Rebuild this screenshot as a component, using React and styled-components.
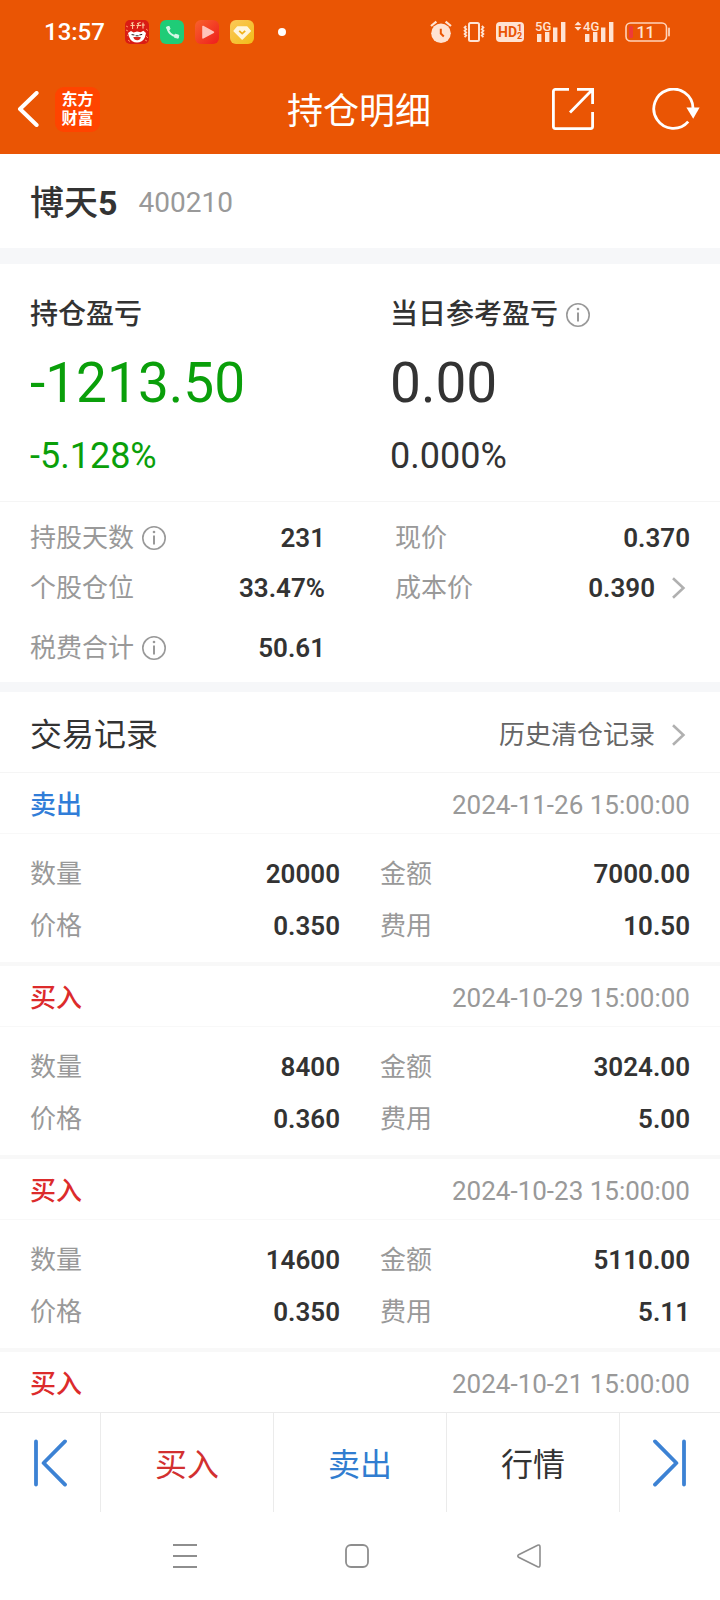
import React from 'react'
import styled, { createGlobalStyle } from 'styled-components'

const GlobalStyle = createGlobalStyle`
  * {
    box-sizing: border-box;
  }
  body {
    margin: 0;
    background: #fff;
    color: #333;
    font-family: Roboto, "Noto Sans CJK SC", sans-serif;
  }
  h1, h2, dl, dd, p {
    margin: 0;
    font-weight: 400;
  }
  button {
    padding: 0;
    border: 0;
    background: none;
    color: inherit;
    font: inherit;
    cursor: pointer;
  }
  svg {
    display: block;
    flex: none;
  }
`
const Page = styled.div`
  display: flex;
  flex-direction: column;
  min-height: 100vh;
`
const TopBar = styled.header`
  background: #ea5504;
  color: #fff;
`
const StatusBar = styled.div`
  display: flex;
  justify-content: space-between;
  align-items: center;
  height: 64px;
  padding: 0 49px 0 44px;
`
const StatusGroup = styled.div`
  display: flex;
  align-items: center;
  gap: 11px;
`
const Signals = styled.div`
  display: flex;
  gap: 8px;
`
const Clock = styled.time`
  margin-right: 9px;
  font-size: 24px;
  font-weight: 500;
  line-height: 24px;
`
const Dot = styled.span`
  width: 8px;
  height: 8px;
  margin-left: 13px;
  border-radius: 50%;
  background: #fff;
`
const TitleBar = styled.div`
  display: grid;
  grid-template-columns: 1fr auto 1fr;
  align-items: center;
  height: 90px;
  padding: 0 19px 0 17px;
`
const TitleSide = styled.div`
  display: flex;
  justify-content: ${props => props.end ? 'flex-end' : 'flex-start'};
  align-items: center;
  gap: ${props => props.end ? '58px' : '16px'};
`
const Title = styled.h1`
  padding-top: 6px;
  font-size: 36px;
  line-height: 44px;
`
const Logo = styled.div`
  display: flex;
  flex-direction: column;
  justify-content: center;
  align-items: center;
  width: 45px;
  height: 45px;
  border-radius: 9px;
  background: #ff4400;
  font-size: 16px;
  font-weight: 700;
  line-height: 19px;
`
const StockBar = styled.section`
  display: flex;
  align-items: center;
  gap: 21px;
  height: 94px;
  padding: 4px 30px 0;
`
const StockName = styled.h2`
  font-size: 34px;
  font-weight: 500;
  line-height: 44px;
`
const StockNumber = styled.span`
  font-weight: 700;
`
const StockCode = styled.span`
  color: #999;
  font-size: 28px;
  line-height: 32px;
`
const Band = styled.div`
  height: ${props => props.size}px;
  background: ${props => props.light ? '#f8f8f8' : '#f6f7f9'};
`
const Profit = styled.section`
  display: grid;
  grid-template-columns: 1fr 1fr;
  padding: 35px 0 23px;
  border-bottom: 1px solid #f5f5f5;
`
const ProfitItem = styled.div`
  padding-left: 30px;
  color: ${props => props.loss ? '#0a9f0a' : '#333'};
`
const ProfitLabel = styled.h2`
  display: flex;
  align-items: center;
  gap: 8px;
  height: 32px;
  color: #333;
  font-size: 28px;
  font-weight: 500;
  line-height: 32px;
`
const ProfitValue = styled.p`
  padding-top: 20px;
  font-size: 55px;
  line-height: 64px;
`
const ProfitRate = styled.p`
  padding-top: 19px;
  font-size: 36px;
  line-height: 44px;
`
const Pairs = styled.dl`
  display: grid;
  grid-template-columns: 1fr 1fr;
  column-gap: ${props => props.wide ? '70px' : '40px'};
  padding: ${props => props.wide ? '11px 30px 9px' : '14px 30px 10px'};
`
const Pair = styled.div`
  display: flex;
  justify-content: space-between;
  align-items: center;
  height: ${props => props.height}px;
  margin-top: ${props => props.spaced ? '10px' : '0'};
`
const Label = styled.dt`
  display: flex;
  align-items: center;
  gap: 8px;
  color: #999;
  font-size: 26px;
  line-height: 32px;
`
const Value = styled.dd`
  display: flex;
  align-items: center;
  gap: 16px;
  font-size: 26px;
  font-weight: 600;
  line-height: 32px;
`
const IconButton = styled.button`
  display: flex;
`
const RecordsHead = styled.div`
  display: flex;
  justify-content: space-between;
  align-items: center;
  height: 81px;
  padding: 5px 30px 0;
  border-bottom: 1px solid #f5f5f5;
`
const RecordsTitle = styled.h2`
  font-size: 32px;
  line-height: 40px;
`
const HistoryLink = styled.a`
  display: flex;
  align-items: center;
  gap: 16px;
  color: #666;
  font-size: 26px;
  line-height: 32px;
  text-decoration: none;
`
const Records = styled.section`
  flex: 1;
`
const RecordHead = styled.div`
  display: flex;
  justify-content: space-between;
  align-items: center;
  height: ${props => props.open ? '61px' : '60px'};
  padding: 3px 30px 0;
  border-bottom: ${props => props.open ? '1px solid #f8f8f8' : '0'};
  font-size: 26px;
  line-height: 32px;
`
const Side = styled.span`
  color: ${props => props.buy ? '#dc2b2b' : '#317dd8'};
  font-weight: 500;
`
const Stamp = styled.time`
  color: #999;
`
const ActionBar = styled.nav`
  display: flex;
  height: 100px;
  border-top: 1px solid #ebebeb;
`
const ActionButton = styled.button`
  display: flex;
  flex: ${props => props.edge ? '0 0 101px' : '1'};
  justify-content: center;
  align-items: center;
  padding-top: ${props => props.edge ? '0' : '4px'};
  border-right: 1px solid #ebebeb;
  color: ${props => props.tone || '#333'};
  font-size: 32px;
  line-height: 40px;
  &:last-child {
    flex-basis: 100px;
    border-right: 0;
  }
`
const SystemBar = styled.nav`
  display: flex;
  justify-content: center;
  align-items: center;
  gap: 148px;
  height: 88px;
  padding-right: 6px;
`

const InfoIcon = () => (
  <svg width="24" height="24" viewBox="0 0 24 24" fill="none" stroke="#999">
    <circle cx="12" cy="12" r="11.2" strokeWidth="1.6" />
    <path d="M12 9.4v9" strokeWidth="2" />
    <circle cx="12" cy="6" r="1.3" fill="#999" stroke="none" />
  </svg>
)
const Chevron = () => (
  <svg width="19" height="22" viewBox="0 0 19 22" fill="none" stroke="#b0b0b0" strokeWidth="2.6">
    <path d="M2 1.2l10.4 9.8L2 20.8" />
  </svg>
)
const BackIcon = () => (
  <svg width="22" height="36" viewBox="0 0 22 36" fill="none" stroke="#fff" strokeWidth="4">
    <path d="M19.6 2L3 18l16.6 16" strokeLinecap="round" strokeLinejoin="round" />
  </svg>
)
const ShareIcon = () => (
  <svg width="42" height="42" viewBox="0 0 42 42" fill="none" stroke="#fff" strokeWidth="2.8">
    <path d="M17 1.4H3.4a2 2 0 0 0-2 2v35.2a2 2 0 0 0 2 2h35.2a2 2 0 0 0 2-2V24" />
    <path d="M25 1.4h15.6V16M18 24.6L40 2" />
  </svg>
)
const RefreshIcon = () => (
  <svg width="49" height="42" viewBox="0 0 49 42" fill="none" stroke="#fff" strokeWidth="2.8">
    <path d="M36.2 33.6A19.6 19.6 0 1 1 41 20" />
    <path d="M34.4 19.4h13.2l-6.4 11.4z" fill="#fff" stroke="none" />
  </svg>
)

const FestiveIcon = () => (
  <svg width="24" height="24" viewBox="0 0 24 24">
    <rect width="24" height="24" rx="5" fill="#d91c14" />
    <path d="M6 3.4l2.6-1M5.4 5.4h4.4M7.6 3v6M12 3.6l3.6-1.2M11.4 5.4h4.8M13.6 3.4l-1.4 5.2M18 2.6v6M16.8 5h3" stroke="#ffd9a8" strokeWidth="1" />
    <path d="M1 10l2 1M21 9l2 1.6M2 15l1.6 1M21 16l2 2M3 20l2 1.6M1 6l2 1M20 20l2 1" stroke="#ff8a5c" strokeWidth="1" />
    <path d="M3 13l3-2 2.6 1.4 3.4-.8 3.6.6 2.800-1.400L21 13l-1.200 4.600C18.400 21 15.400 22.600 12 22.600S5.600 21 4.400 17.600z" fill="#fff" />
    <path d="M8.400 17h7.400c-.4 2.400-1.600 3.200-3.600 3.200S8.800 19.400 8.400 17z" fill="#d8261c" />
    <path d="M6.600 14.600l2.800.4M17.200 14.400l-2.800.6M10.600 15.800h3" stroke="#222" strokeWidth="1" />
  </svg>
)
const PhoneIcon = () => (
  <svg width="24" height="24" viewBox="0 0 24 24">
    <rect width="24" height="24" rx="6" fill="#1fcc77" />
    <path d="M7.8 8.4c.6 4 3.6 7.2 8.6 8" fill="none" stroke="#d5f7e6" strokeWidth="2" />
    <path d="M6.3 7.200l2.800-.9 1 2.800-2.400 1.200zM15 14.200l3.800 1-.6 3-3.600-.8z" fill="#d5f7e6" stroke="#d5f7e6" strokeLinejoin="round" />
  </svg>
)
const VideoIcon = () => (
  <svg width="24" height="24" viewBox="0 0 24 24">
    <defs>
      <linearGradient id="video" x1="0" y1="0" x2="1" y2="1">
        <stop offset="0" stopColor="#f8622c" />
        <stop offset="1" stopColor="#ee1d1d" />
      </linearGradient>
    </defs>
    <rect width="24" height="24" rx="6" fill="url(#video)" />
    <path d="M8 6.5v11.4l10.4-5.7z" fill="#ffc4bb" stroke="#ffc4bb" strokeWidth="1.6" strokeLinejoin="round" />
  </svg>
)
const GemIcon = () => (
  <svg width="24" height="24" viewBox="0 0 24 24">
    <defs>
      <linearGradient id="gem" x1="0" y1="0" x2="1" y2="1">
        <stop offset="0" stopColor="#fbc95a" />
        <stop offset="1" stopColor="#f2bc18" />
      </linearGradient>
    </defs>
    <rect width="24" height="24" rx="6" fill="url(#gem)" />
    <path d="M7.6 7h9.200l3.400 4-8 8-8-8z" fill="#fff6dc" stroke="#fff6dc" strokeWidth="1.6" strokeLinejoin="round" />
    <path d="M9.200 10.800l3 2.800 3-2.800" fill="none" stroke="#f0b21c" strokeWidth="1.8" />
  </svg>
)
const AlarmIcon = () => (
  <svg width="22" height="24" viewBox="0 0 22 24" fill="none">
    <circle cx="11" cy="13.2" r="9.8" fill="#ffe3d3" />
    <path d="M1 6l5.4-4.400M21 6l-5.400-4.400" stroke="#ffe3d3" strokeWidth="2.2" />
    <path d="M10.8 8.800v4.800l3 2.800" stroke="#ea5504" strokeWidth="2" />
  </svg>
)
const VibrateIcon = () => (
  <svg width="22" height="22" viewBox="0 0 22 22" fill="none" stroke="#ffe3d3">
    <rect x="6" y="2" width="10" height="18" rx="1.5" strokeWidth="2" />
    <path d="M3.200 5l-1.600 1.600 1.600 1.600-1.600 1.600 1.600 1.600-1.600 1.600 1.600 1.600-1.600 1.600M18.800 5l1.600 1.600-1.600 1.600 1.600 1.600-1.600 1.600 1.600 1.600-1.600 1.600 1.600 1.600" strokeWidth="1.8" />
  </svg>
)
const HdIcon = () => (
  <svg width="28" height="20" viewBox="0 0 28 20" fill="#ea5504" fontFamily="Roboto" fontWeight="700">
    <rect width="28" height="20" rx="4" fill="#ffe3d3" />
    <text x="2" y="15" fontSize="14">HD</text>
    <text x="21" y="9" fontSize="9">1</text>
    <text x="21" y="17" fontSize="9">2</text>
  </svg>
)
const SignalIcon = ({ label, arrows }) => (
  <svg width={arrows ? 40 : 31} height="24" viewBox={arrows ? '-9 0 40 24' : '0 0 31 24'} fill="#ffe3d3">
    {arrows && <path d="M-8.500 5.200l3.500-3.800 3.500 3.800zM-8.500 7h7L-5 10.800z" />}
    <text x="0" y="11" fontFamily="Roboto" fontWeight="500" fontSize="13">{label}</text>
    <path d="M2 14h4.400v8H2zM10 12h4.400v10H10zM18 7.500h4.400V22H18zM26 2h4.400v20H26z" />
  </svg>
)
const BatteryIcon = () => (
  <svg width="46" height="20" viewBox="0 0 46 20">
    <rect x="1" y="1" width="40.5" height="18" rx="4.5" fill="none" stroke="#ffd3bb" strokeWidth="1.6" />
    <path d="M44 6.500v7" stroke="#ffd3bb" strokeWidth="1.8" strokeLinecap="round" />
    <rect x="4" y="4" width="4" height="12" rx="1.5" fill="#ee3a3a" />
    <text x="20.5" y="15.5" textAnchor="middle" fontFamily="Roboto" fontWeight="500" fontSize="16" fill="#ffe3d3">11</text>
  </svg>
)

const FirstIcon = () => (
  <svg width="34" height="48" viewBox="0 0 34 48" fill="none" stroke="#3c82d4" strokeWidth="3.8" strokeLinecap="round" strokeLinejoin="round">
    <path d="M3 2.400v43.200M32 2.400L10.600 24 32 45.600" />
  </svg>
)
const LastIcon = () => (
  <svg width="34" height="48" viewBox="0 0 34 48" fill="none" stroke="#3c82d4" strokeWidth="3.8" strokeLinecap="round" strokeLinejoin="round">
    <path d="M31 2.400v43.200M2 2.400L23.400 24 2 45.600" />
  </svg>
)

const records = [
  { side: '卖出', time: '2024-11-26 15:00:00', count: '20000', amount: '7000.00', price: '0.350', fee: '10.50' },
  { side: '买入', time: '2024-10-29 15:00:00', count: '8400', amount: '3024.00', price: '0.360', fee: '5.00' },
  { side: '买入', time: '2024-10-23 15:00:00', count: '14600', amount: '5110.00', price: '0.350', fee: '5.11' },
  { side: '买入', time: '2024-10-21 15:00:00' },
]

const Field = ({ label, value, height = 50, info, more, spaced }) => (
  <Pair height={height} spaced={spaced}>
    <Label>
      {label}
      {info && <IconButton aria-label={`${label}说明`}><InfoIcon /></IconButton>}
    </Label>
    <Value>
      {value}
      {more && <IconButton aria-label={`${label}详情`}><Chevron /></IconButton>}
    </Value>
  </Pair>
)

const Record = ({ record }) => {
  const open = Boolean(record.count)
  return (
    <article>
      <RecordHead open={open}>
        <Side buy={record.side === '买入'}>{record.side}</Side>
        <Stamp>{record.time}</Stamp>
      </RecordHead>
      {open &&
        <>
          <Pairs>
            <Field height={52} label="数量" value={record.count} />
            <Field height={52} label="金额" value={record.amount} />
            <Field height={52} label="价格" value={record.price} />
            <Field height={52} label="费用" value={record.fee} />
          </Pairs>
          <Band size={4} light />
        </>
      }
    </article>
  )
}

export default function App() {
  return (
    <Page>
      <GlobalStyle />
      <TopBar>
        <StatusBar>
          <StatusGroup>
            <Clock>13:57</Clock>
            <FestiveIcon />
            <PhoneIcon />
            <VideoIcon />
            <GemIcon />
            <Dot />
          </StatusGroup>
          <StatusGroup>
            <AlarmIcon />
            <VibrateIcon />
            <HdIcon />
            <Signals>
              <SignalIcon label="5G" />
              <SignalIcon label="4G" arrows />
            </Signals>
            <BatteryIcon />
          </StatusGroup>
        </StatusBar>
        <TitleBar>
          <TitleSide>
            <IconButton aria-label="返回"><BackIcon /></IconButton>
            <Logo>
              <span>东方</span>
              <span>财富</span>
            </Logo>
          </TitleSide>
          <Title>持仓明细</Title>
          <TitleSide end>
            <IconButton aria-label="分享"><ShareIcon /></IconButton>
            <IconButton aria-label="刷新"><RefreshIcon /></IconButton>
          </TitleSide>
        </TitleBar>
      </TopBar>

      <StockBar>
        <StockName>博天<StockNumber>5</StockNumber></StockName>
        <StockCode>400210</StockCode>
      </StockBar>
      <Band size={16} />

      <Profit>
        <ProfitItem loss>
          <ProfitLabel>持仓盈亏</ProfitLabel>
          <ProfitValue>-1213.50</ProfitValue>
          <ProfitRate>-5.128%</ProfitRate>
        </ProfitItem>
        <ProfitItem>
          <ProfitLabel>
            当日参考盈亏
            <IconButton aria-label="当日参考盈亏说明"><InfoIcon /></IconButton>
          </ProfitLabel>
          <ProfitValue>0.00</ProfitValue>
          <ProfitRate>0.000%</ProfitRate>
        </ProfitItem>
      </Profit>

      <Pairs wide>
        <Field label="持股天数" value="231" info />
        <Field label="现价" value="0.370" />
        <Field label="个股仓位" value="33.47%" />
        <Field label="成本价" value="0.390" more />
        <Field label="税费合计" value="50.61" info spaced />
      </Pairs>
      <Band size={10} />

      <RecordsHead>
        <RecordsTitle>交易记录</RecordsTitle>
        <HistoryLink href="#history">历史清仓记录<Chevron /></HistoryLink>
      </RecordsHead>
      <Records>
        {records.map(record => <Record key={record.time} record={record} />)}
      </Records>

      <ActionBar>
        <ActionButton edge aria-label="上一只"><FirstIcon /></ActionButton>
        <ActionButton tone="#d23030">买入</ActionButton>
        <ActionButton tone="#317dd0">卖出</ActionButton>
        <ActionButton>行情</ActionButton>
        <ActionButton edge aria-label="下一只"><LastIcon /></ActionButton>
      </ActionBar>
      <SystemBar>
        <IconButton aria-label="最近任务">
          <svg width="24" height="24" viewBox="0 0 24 24" stroke="#8e8e8e" strokeWidth="1.8">
            <path d="M0 1h24M0 12h24M0 23h24" />
          </svg>
        </IconButton>
        <IconButton aria-label="主屏幕">
          <svg width="24" height="24" viewBox="0 0 24 24" fill="none" stroke="#8e8e8e" strokeWidth="1.8">
            <rect x="1" y="1" width="22" height="22" rx="5" />
          </svg>
        </IconButton>
        <IconButton aria-label="返回上一级">
          <svg width="24" height="24" viewBox="0 0 24 24" fill="none" stroke="#8e8e8e" strokeWidth="1.6">
            <path d="M1.6 10.700L20.600 1.200Q23 .4 23 3v18q0 2.600-2.400 1.800L1.600 13.300Q0 12 1.600 10.700z" />
          </svg>
        </IconButton>
      </SystemBar>
    </Page>
  )
}
